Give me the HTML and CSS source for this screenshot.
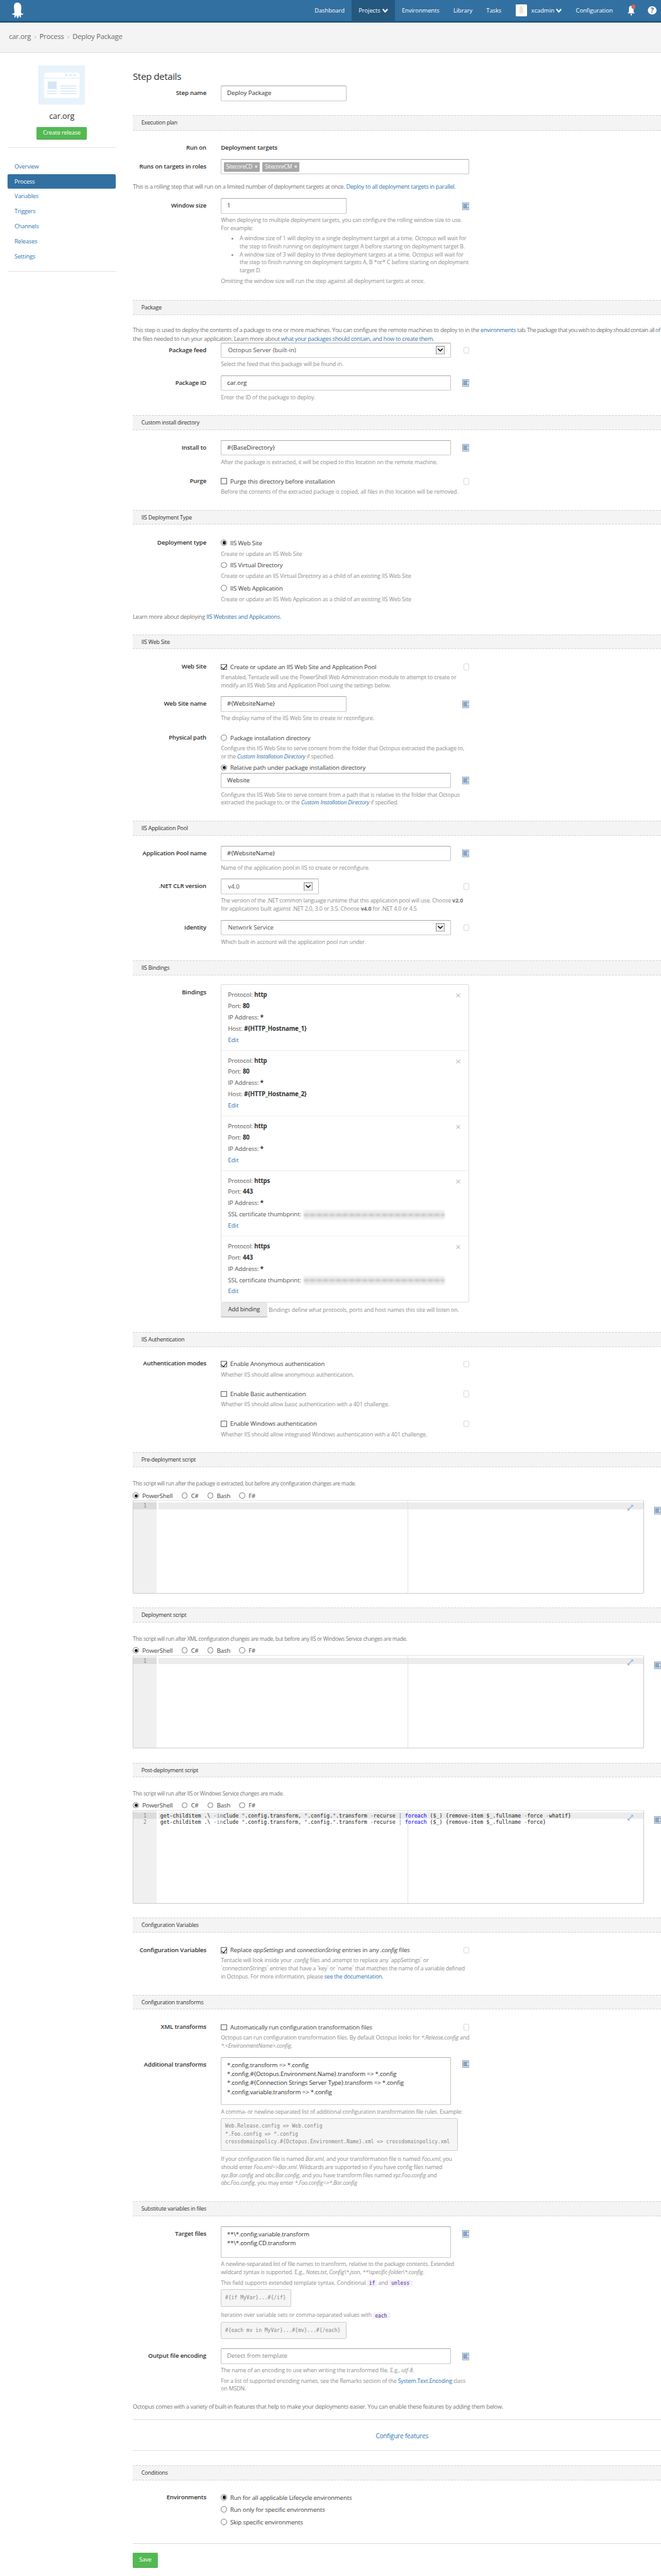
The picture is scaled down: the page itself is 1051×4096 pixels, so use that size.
FILE: index.html
```html
<!DOCTYPE html>
<html lang="en">
<head>
<meta charset="utf-8">
<title>Deploy Package</title>
<link rel="stylesheet" href="styles.css">
</head>
<body>
<svg class="defs" width="0" height="0" aria-hidden="true">
  <symbol id="var" viewBox="0 0 15 16">
    <rect x=".5" y=".5" width="14" height="15" fill="#fff" stroke="#7f8a94"/>
    <rect x="2" y="2" width="8" height="12" fill="#a9c8e8"/>
    <path d="M2 4h8M2 6.500h8M2 9h8M2 11.500h8" stroke="#3f78b5" stroke-width="1"/>
    <path d="M10.500 1v14" stroke="#7f8a94"/>
    <path d="M12.500 3l1.500 2.500h-3zM12.500 13l-1.500-2.500h3z" fill="#6e7780"/>
  </symbol>
  <symbol id="chev" viewBox="0 0 19 18">
    <rect x=".5" y=".5" width="18" height="17" fill="#eee" stroke="#6f6f6f"/>
    <path d="M4.500 6l5 5 5-5" fill="none" stroke="#111" stroke-width="2.200"/>
  </symbol>
  <symbol id="expand" viewBox="0 0 14 14">
    <path d="M3 11L11 3" stroke="#8fb6dc" stroke-width="2"/>
    <path d="M8 1h5v5zM1 8l5 5H1z" fill="#8fb6dc"/>
  </symbol>
  <symbol id="down" viewBox="0 0 12 10">
    <path d="M1 2l5 6 5-6" fill="none" stroke="#fff" stroke-width="3"/>
  </symbol>
  <symbol id="octo" viewBox="0 0 34 34">
    <path d="M17 0c6 0 8.500 5 8.500 11 0 5-1.500 8-.5 11 .6 1.800 3 2.600 5 1.500-.6 2.800-3.700 3.700-6 2.500.8 2 .8 4.500.3 7-1.800-1.200-3-3.800-3.600-6-.4 2.500-1.200 5-3.200 7-1.700-2-2.400-4.500-2.700-7-.8 2.300-2 4.800-4 6-.4-2.500-.2-5 .6-7-2.300 1.200-5.400.3-6-2.500 2 1.100 4.400.3 5-1.500 1-3-.6-6-.6-11C8.800 5 11 0 17 0z"/>
  </symbol>
</svg>

<header class="topbar">
  <svg class="logo" aria-label="Octopus Deploy"><use href="#octo"/></svg>
  <nav class="topnav">
    <a class="nav-item">Dashboard</a>
    <a class="nav-item is-active">Projects<svg class="caret"><use href="#down"/></svg></a>
    <a class="nav-item">Environments</a>
    <a class="nav-item">Library</a>
    <a class="nav-item">Tasks</a>
    <a class="nav-item nav-user">
      <span class="avatar"><svg class="avatar-octo"><use href="#octo"/></svg></span>xcadmin<svg class="caret"><use href="#down"/></svg>
    </a>
    <a class="nav-item">Configuration</a>
    <a class="nav-item nav-bell">
      <svg class="bell" viewBox="0 0 18 25"><path d="M9 3c3.500 0 5 2.500 5 6v6c0 2 1.500 2.500 3 4H1c1.500-1.500 3-2 3-4V9c0-3.500 1.500-6 5-6z" fill="#fff"/><path d="M7 20h4l-2 5z" fill="#fff"/><circle cx="14" cy="5" r="4.500" fill="#e2604f"/></svg>
    </a>
    <a class="nav-help"><span class="help-bubble">?</span></a>
  </nav>
</header>

<div class="crumbs">
  <a>car.org</a><i>›</i><a>Process</a><i>›</i><a>Deploy Package</a>
</div>

<div class="layout">
  <aside class="side">
    <svg class="proj-icon" viewBox="0 0 100 84">
      <rect width="100" height="84" rx="2" fill="#e8f2fb"/>
      <rect x="12" y="15.500" width="76" height="54" rx="5" fill="#fff"/>
      <rect x="12" y="26" width="76" height="2.500" fill="#e8f2fb"/>
      <circle cx="60" cy="21" r="2.300" fill="#d5e6f6"/><circle cx="69" cy="21" r="2.300" fill="#d5e6f6"/><circle cx="78" cy="21" r="2.300" fill="#d5e6f6"/>
      <rect x="20" y="34.500" width="19" height="16" fill="#d5e6f6"/>
      <path d="M19 55h20M19 60h20M47 44h34M47 49h34M47 55h34M47 60h34" stroke="#d5e6f6" stroke-width="2"/>
    </svg>
    <h3 class="proj-name">car.org</h3>
    <a class="btn btn-green btn-release">Create release</a>
    <hr class="side-rule">
    <ul class="side-nav">
      <li><a>Overview</a></li>
      <li class="is-on"><a>Process</a></li>
      <li><a>Variables</a></li>
      <li><a>Triggers</a></li>
      <li><a>Channels</a></li>
      <li><a>Releases</a></li>
      <li><a>Settings</a></li>
    </ul>
    <hr class="side-rule side-rule-end">
  </aside>

  <main class="main">
    <h2 class="title">Step details</h2>

    <div class="row g5"><label class="lbl lbl-input">Step name</label>
      <div class="ctl"><div class="line"><div class="inp w-md">Deploy Package</div></div></div></div>

    <div class="sec g30 sec-tall">Execution plan</div>
    <div class="row g28"><label class="lbl">Run on</label><div class="ctl strong">Deployment targets</div></div>
    <div class="row g13"><label class="lbl lbl-input">Runs on targets in roles</label>
      <div class="ctl"><div class="roles"><span class="tag">SitecoreCD <b>×</b></span><span class="tag">SitecoreCM <b>×</b></span></div></div></div>
    <p class="note g17">This is a rolling step that will run on a limited number of deployment targets at once. <a>Deploy to all deployment targets in parallel.</a></p>
    <div class="row g16"><label class="lbl lbl-input">Window size</label>
      <div class="ctl">
        <div class="line"><div class="inp w-md">1</div><svg class="var"><use href="#var"/></svg></div>
        <p class="help nb g6">When deploying to multiple deployment targets, you can configure the rolling window size to use.<br>For example:</p>
        <ul class="help-list">
          <li>A window size of 1 will deploy to a single deployment target at a time. Octopus will wait for the step to finish running on deployment target A before starting on deployment target B.</li>
          <li>A window size of 3 will deploy to three deployment targets at a time. Octopus will wait for the step to finish running on deployment targets A, B *or* C before starting on deployment target D.</li>
        </ul>
        <p class="help g5">Omitting the window size will run the step against all deployment targets at once.</p>
      </div></div>

    <div class="sec g31">Package</div>
    <p class="note note-tight g24">This step is used to deploy the contents of a package to one or more machines. You can configure the remote machines to deploy to in the <a>environments</a> <span class="note-tail">tab. The package that you wish to deploy should contain all of</span><br>the files needed to run your application. Learn more about <a>what your packages should contain, and how to create them.</a></p>
    <div class="row"><label class="lbl lbl-input">Package feed</label>
      <div class="ctl"><div class="line"><div class="sel sel-short w-lg">Octopus Server (built-in)<svg class="chev"><use href="#chev"/></svg></div><span class="box"></span></div>
      <p class="help g6">Select the feed that this package will be found in.</p></div></div>
    <div class="row g14"><label class="lbl lbl-input">Package ID</label>
      <div class="ctl"><div class="line"><div class="inp w-lg">car.org</div><svg class="var"><use href="#var"/></svg></div>
      <p class="help g6">Enter the ID of the package to deploy.</p></div></div>

    <div class="sec g30">Custom install directory</div>
    <div class="row g21"><label class="lbl lbl-input">Install to</label>
      <div class="ctl"><div class="line"><div class="inp w-lg">#{BaseDirectory}</div><svg class="var"><use href="#var"/></svg></div>
      <p class="help g6">After the package is extracted, it will be copied to this location on the remote machine.</p></div></div>
    <div class="row g22"><label class="lbl">Purge</label>
      <div class="ctl"><div class="line"><span class="opt"><span class="cb"></span>Purge this directory before installation</span><span class="box"></span></div>
      <p class="help g4">Before the contents of the extracted package is copied, all files in this location will be removed.</p></div></div>

    <div class="sec g30">IIS Deployment Type</div>
    <div class="row g29"><label class="lbl">Deployment type</label>
      <div class="ctl">
        <span class="opt"><span class="rd on"></span>IIS Web Site</span>
        <p class="help g5">Create or update an IIS Web Site</p>
        <span class="opt g6"><span class="rd"></span>IIS Virtual Directory</span>
        <p class="help g5">Create or update an IIS Virtual Directory as a child of an existing IIS Web Site</p>
        <span class="opt g7"><span class="rd"></span>IIS Web Application</span>
        <p class="help g5">Create or update an IIS Web Application as a child of an existing IIS Web Site</p>
      </div></div>
    <p class="note g20 note-sm">Learn more about deploying <a>IIS Websites and Applications.</a></p>

    <div class="sec g28">IIS Web Site</div>
    <div class="row g28"><label class="lbl">Web Site</label>
      <div class="ctl"><div class="line"><span class="opt"><span class="cb on"></span>Create or update an IIS Web Site and Application Pool</span><span class="box"></span></div>
      <p class="help nb g4">If enabled, Tentacle will use the PowerShell Web Administration module to attempt to create or<br>modify an IIS Web Site and Application Pool using the settings below.</p></div></div>
    <div class="row g15"><label class="lbl lbl-input">Web Site name</label>
      <div class="ctl"><div class="line"><div class="inp w-md">#{WebsiteName}</div><svg class="var"><use href="#var"/></svg></div>
      <p class="help g6">The display name of the IIS Web Site to create or reconfigure.</p></div></div>
    <div class="row g23"><label class="lbl">Physical path</label>
      <div class="ctl">
        <span class="opt"><span class="rd"></span>Package installation directory</span>
        <p class="help nb g4">Configure this IIS Web Site to serve content from the folder that Octopus extracted the package to,<br>or the <a><em>Custom Installation Directory</em></a> if specified.</p>
        <span class="opt g6"><span class="rd on"></span>Relative path under package installation directory</span>
        <div class="line"><div class="inp w-lg">Website</div><svg class="var"><use href="#var"/></svg></div>
        <p class="help nb g6">Configure this IIS Web Site to serve content from a path that is relative to the folder that Octopus<br>extracted the package to, or the <a><em>Custom Installation Directory</em></a> if specified.</p>
      </div></div>

    <div class="sec g30">IIS Application Pool</div>
    <div class="row g21"><label class="lbl lbl-input">Application Pool name</label>
      <div class="ctl"><div class="line"><div class="inp w-lg">#{WebsiteName}</div><svg class="var"><use href="#var"/></svg></div>
      <p class="help g6">Name of the application pool in IIS to create or reconfigure.</p></div></div>
    <div class="row g15"><label class="lbl lbl-input">.NET CLR version</label>
      <div class="ctl"><div class="line"><div class="sel w-sm">v4.0<svg class="chev"><use href="#chev"/></svg></div><span class="box"></span></div>
      <p class="help nb g6">The version of the .NET common language runtime that this application pool will use. Choose <b>v2.0</b><br>for applications built against .NET 2.0, 3.0 or 3.5. Choose <b>v4.0</b> for .NET 4.0 or 4.5</p></div></div>
    <div class="row g15"><label class="lbl lbl-input">Identity</label>
      <div class="ctl"><div class="line"><div class="sel w-lg">Network Service<svg class="chev"><use href="#chev"/></svg></div><span class="box"></span></div>
      <p class="help g6">Which built-in account will the application pool run under.</p></div></div>

    <div class="sec g30">IIS Bindings</div>
    <div class="row g20"><label class="lbl lbl-bind">Bindings</label>
      <div class="ctl">
        <div class="bindings">
          <div class="binding"><span class="x">×</span><p>Protocol: <b>http</b></p><p>Port: <b>80</b></p><p>IP Address: <b>*</b></p><p>Host: <b>#{HTTP_Hostname_1}</b></p><p><a>Edit</a></p></div>
          <div class="binding"><span class="x">×</span><p>Protocol: <b>http</b></p><p>Port: <b>80</b></p><p>IP Address: <b>*</b></p><p>Host: <b>#{HTTP_Hostname_2}</b></p><p><a>Edit</a></p></div>
          <div class="binding"><span class="x">×</span><p>Protocol: <b>http</b></p><p>Port: <b>80</b></p><p>IP Address: <b>*</b></p><p><a>Edit</a></p></div>
          <div class="binding"><span class="x">×</span><p>Protocol: <b>https</b></p><p>Port: <b>443</b></p><p>IP Address: <b>*</b></p><p>SSL certificate thumbprint: <span class="blur"></span></p><p><a>Edit</a></p></div>
          <div class="binding"><span class="x">×</span><p>Protocol: <b>https</b></p><p>Port: <b>443</b></p><p>IP Address: <b>*</b></p><p>SSL certificate thumbprint: <span class="blur"></span></p><p><a>Edit</a></p></div>
        </div>
        <div class="bind-foot"><a class="btn btn-grey">Add binding</a><span class="help">Bindings define what protocols, ports and host names this site will listen on.</span></div>
      </div></div>

    <div class="sec g31">IIS Authentication</div>
    <div class="row g26"><label class="lbl">Authentication modes</label>
      <div class="ctl">
        <div class="line"><span class="opt"><span class="cb on"></span>Enable Anonymous authentication</span><span class="box"></span></div>
        <p class="help g5">Whether IIS should allow anonymous authentication.</p>
        <div class="line g22"><span class="opt"><span class="cb"></span>Enable Basic authentication</span><span class="box"></span></div>
        <p class="help g4">Whether IIS should allow basic authentication with a 401 challenge.</p>
        <div class="line g23"><span class="opt"><span class="cb"></span>Enable Windows authentication</span><span class="box"></span></div>
        <p class="help g5">Whether IIS should allow integrated Windows authentication with a 401 challenge.</p>
      </div></div>

    <div class="sec g29">Pre-deployment script</div>
    <p class="note g27 note-xs">This script will run after the package is extracted, but before any configuration changes are made.</p>
    <div class="langs g7"><span class="opt"><span class="rd on"></span>PowerShell</span><span class="opt"><span class="rd"></span>C#</span><span class="opt"><span class="rd"></span>Bash</span><span class="opt"><span class="rd"></span>F#</span></div>
    <div class="editor-line">
      <div class="editor"><div class="gutter"><span class="ln on">1</span></div><div class="code"><div class="cl on"></div></div><svg class="expand"><use href="#expand"/></svg></div>
      <svg class="var"><use href="#var"/></svg>
    </div>

    <div class="sec g30">Deployment script</div>
    <p class="note g26 note-xs">This script will run after XML configuration changes are made, but before any IIS or Windows Service changes are made.</p>
    <div class="langs g7"><span class="opt"><span class="rd on"></span>PowerShell</span><span class="opt"><span class="rd"></span>C#</span><span class="opt"><span class="rd"></span>Bash</span><span class="opt"><span class="rd"></span>F#</span></div>
    <div class="editor-line">
      <div class="editor"><div class="gutter"><span class="ln on">1</span></div><div class="code"><div class="cl on"></div></div><svg class="expand"><use href="#expand"/></svg></div>
      <svg class="var"><use href="#var"/></svg>
    </div>

    <div class="sec g30">Post-deployment script</div>
    <p class="note g26 note-xs">This script will run after IIS or Windows Service changes are made.</p>
    <div class="langs g7"><span class="opt"><span class="rd on"></span>PowerShell</span><span class="opt"><span class="rd"></span>C#</span><span class="opt"><span class="rd"></span>Bash</span><span class="opt"><span class="rd"></span>F#</span></div>
    <div class="editor-line">
      <div class="editor"><div class="gutter"><span class="ln on">1</span><span class="ln">2</span></div>
        <div class="code">
          <div class="cl on">get-childitem .\ <i>-in</i>clude <i>*</i>.config.transform, <i>*</i>.config.<i>*</i>.transform <i>-</i>recurse <i>|</i> <u>foreach</u> ($_) {remove-item $_.fullname <i>-</i>force <i>-</i>whatif}</div>
          <div class="cl">get-childitem .\ <i>-in</i>clude <i>*</i>.config.transform, <i>*</i>.config.<i>*</i>.transform <i>-</i>recurse <i>|</i> <u>foreach</u> ($_) {remove-item $_.fullname <i>-</i>force}</div>
        </div><svg class="expand"><use href="#expand"/></svg></div>
      <svg class="var"><use href="#var"/></svg>
    </div>

    <div class="sec g30">Configuration Variables</div>
    <div class="row g28"><label class="lbl">Configuration Variables</label>
      <div class="ctl"><div class="line"><span class="opt"><span class="cb on"></span><span>Replace <em>appSettings</em> and <em>connectionString</em> entries in any <em>.config</em> files</span></span><span class="box"></span></div>
      <p class="help nb g4">Tentacle will look inside your <em>.config</em> files and attempt to replace any `appSettings` or<br>`connectionStrings` entries that have a `key` or `name` that matches the name of a variable defined<br>in Octopus. For more information, please <a>see the documentation.</a></p></div></div>

    <div class="sec g30">Configuration transforms</div>
    <div class="row g28"><label class="lbl">XML transforms</label>
      <div class="ctl"><div class="line"><span class="opt"><span class="cb"></span>Automatically run configuration transformation files</span><span class="box"></span></div>
      <p class="help nb g4">Octopus can run configuration transformation files. By default Octopus looks for <em>*.Release.config</em> and<br><em>*.&lt;EnvironmentName&gt;.config</em>.</p></div></div>
    <div class="row g15"><label class="lbl lbl-area">Additional transforms</label>
      <div class="ctl"><div class="line line-top"><div class="area w-lg area-4">*.config.transform =&gt; *.config<br>*.config.#{Octopus.Environment.Name}.transform =&gt; *.config<br>*.config.#{Connection Strings Server Type}.transform =&gt; *.config<br>*.config.variable.transform =&gt; *.config</div><svg class="var var-top"><use href="#var"/></svg></div>
      <p class="help nb g6">A comma- or newline-separated list of additional configuration transformation file rules. Example:</p>
      <pre class="pre g5 pre-wide">Web.Release.config =&gt; Web.config
*.Foo.config =&gt; *.config
crossdomainpolicy.#{Octopus.Environment.Name}.xml =&gt; crossdomainpolicy.xml</pre>
      <p class="help nb g10">If your configuration file is named <em>Bar.xml</em>, and your transformation file is named <em>Foo.xml</em>, you<br>should enter <em>Foo.xml=&gt;Bar.xml</em>. Wildcards are supported so if you have config files named<br><em>xyz.Bar.config</em> and <em>abc.Bar.config</em>, and you have transform files named <em>xyz.Foo.config</em> and<br><em>abc.Foo.config</em>, you may enter <em>*.Foo.config=&gt;*.Bar.config</em></p></div></div>

    <div class="sec g30">Substitute variables in files</div>
    <div class="row g21"><label class="lbl lbl-area">Target files</label>
      <div class="ctl"><div class="line line-top"><div class="area w-lg area-2">**\*.config.variable.transform<br>**\*.config.CD.transform</div><svg class="var var-top"><use href="#var"/></svg></div>
      <p class="help nb g6">A newline-separated list of file names to transform, relative to the package contents. Extended<br>wildcard syntax is supported. E.g., <em>Notes.txt</em>, <em>Config\*.json</em>, <em>**\specific-folder\*.config</em>.</p>
      <p class="help g6">This field supports extended template syntax. Conditional <code>if</code> and <code>unless</code>:</p>
      <pre class="pre g4 pre-if">#{if MyVar}...#{/if}</pre>
      <p class="help g10">Iteration over variable sets or comma-separated values with <code>each</code>:</p>
      <pre class="pre g4 pre-each">#{each mv in MyVar}...#{mv}...#{/each}</pre>
      </div></div>
    <div class="row g20"><label class="lbl lbl-input">Output file encoding</label>
      <div class="ctl"><div class="line"><div class="inp w-lg is-ph">Detect from template</div><svg class="var"><use href="#var"/></svg></div>
      <p class="help g6">The name of an encoding to use when writing the transformed file. E.g., <em>utf-8</em>.</p>
      <p class="help nb g5">For a list of supported encoding names, see the Remarks section of the <a>System.Text.Encoding</a> class<br>on MSDN.</p></div></div>
    <p class="note g20 note-sm">Octopus comes with a variety of built-in features that help to make your deployments easier. You can enable these features by adding them below.</p>
    <div class="features g18"><a>Configure features</a></div>

    <div class="sec g31">Conditions</div>
    <div class="row g27"><label class="lbl">Environments</label>
      <div class="ctl">
        <span class="opt"><span class="rd on"></span>Run for all applicable Lifecycle environments</span>
        <span class="opt g6"><span class="rd"></span>Run only for specific environments</span>
        <span class="opt g7"><span class="rd"></span>Skip specific environments</span>
      </div></div>
    <hr class="end-rule">
    <a class="btn btn-green btn-save">Save</a>
  </main>
</div>
</body>
</html>
```
FILE: styles.css
```css
/* 1rem is one pixel of the full-size design, drawn at 0.744 */
html { font-size: 0.744px; }
* { box-sizing: border-box; }
body { margin: 0; font-family: "Open Sans", "Noto Sans", sans-serif; font-size: 12.5rem; line-height: 18rem; color: #444; background: #fff; letter-spacing: -0.25rem; }
.defs { position: absolute; }
a { color: #3177b3; text-decoration: none; }
p, ul, h2, h3, pre { margin: 0; }

.g4 { margin-top: 4rem; } .g5 { margin-top: 5rem; } .g6 { margin-top: 6rem; } .g7 { margin-top: 7rem; }
.g10 { margin-top: 10rem; } .g13 { margin-top: 13rem; } .g14 { margin-top: 14rem; } .g15 { margin-top: 15rem; }
.g16 { margin-top: 16rem; } .g17 { margin-top: 17rem; } .g18 { margin-top: 18rem; } .g20 { margin-top: 20rem; }
.g21 { margin-top: 21rem; } .g22 { margin-top: 22rem; } .g23 { margin-top: 23rem; } .g24 { margin-top: 24rem; }
.g26 { margin-top: 26rem; } .g27 { margin-top: 27rem; } .g28 { margin-top: 28rem; } .g29 { margin-top: 29rem; }
.g30 { margin-top: 30rem; } .g31 { margin-top: 31rem; } .g32 { margin-top: 32rem; }

/* top bar */
.topbar { display: flex; justify-content: space-between; height: 49rem; background: #3370a2; border-bottom: 5rem solid #24587f; }
.logo { width: 34rem; height: 34rem; margin: 6rem 0 0 20rem; fill: #fff; }
.topnav { display: flex; align-items: stretch; height: 44rem; padding-right: 10rem; }
.nav-item { display: flex; align-items: center; padding: 0 15rem; color: #fff; letter-spacing: -0.05rem; }
.nav-item.is-active { background: #24587f; }
.caret { width: 12rem; height: 10rem; margin-left: 4rem; }
.avatar { display: flex; align-items: center; justify-content: center; width: 25rem; height: 25rem; margin-right: 9rem; background: #fff; border-radius: 2rem; }
.avatar-octo { width: 18rem; height: 22rem; fill: #e9e6d8; }
.nav-bell { padding-right: 27rem; }
.bell { width: 18rem; height: 25rem; }
.nav-help { display: flex; align-items: center; }
.help-bubble { width: 18rem; height: 18rem; border-radius: 50%; background: #fff; color: #3370a2; font-weight: 700; font-size: 14rem; line-height: 18rem; text-align: center; }

.crumbs { height: 64rem; padding: 20rem 0 0 19rem; background: #f4f4f4; border-bottom: 2rem solid #dedede; font-size: 15rem; line-height: 18rem; color: #6a6a6a; }
.crumbs a { color: #6a6a6a; }
.crumbs i { margin: 0 7rem; font-style: normal; color: #bbb; }

.layout { display: flex; align-items: flex-start; }

/* sidebar */
.side { width: 232rem; margin-left: 16rem; padding-top: 27rem; text-align: center; flex: none; }
.proj-icon { display: block; width: 100rem; height: 84rem; margin: 0 auto; }
.proj-name { margin-top: 13rem; font-size: 17rem; line-height: 24rem; font-weight: 400; color: #333; }
.btn { display: inline-block; border-radius: 2rem; text-align: center; }
.btn-green { background: #53b953; border-bottom: 2rem solid #45a045; color: #fff; }
.btn-release { width: 108rem; height: 28rem; margin-top: 10rem; line-height: 25rem; }
.side-rule { height: 1rem; margin: 16rem 0 0; border: 0; background: #e2e2e2; }
.side-rule-end { margin-top: 16rem; }
.side-nav { margin: 24rem 0 0; padding: 0; list-style: none; text-align: left; }
.side-nav li { height: 32rem; padding-left: 15rem; line-height: 32rem; }
.side-nav li.is-on { background: #3370a2; border-radius: 3rem; }
.side-nav li.is-on a { color: #fff; }

/* main column */
.main { flex: 1; min-width: 0; margin-left: 36rem; padding: 35rem 0 17rem; }
.title { font-size: 20rem; line-height: 30rem; font-weight: 400; color: #333; letter-spacing: -0.4rem; }
.sec { height: 32rem; padding-left: 18rem; background: #f4f4f4; border-top: 1px dashed #d4d4d4; border-bottom: 1px dashed #d4d4d4; font-size: 12rem; line-height: 30rem; color: #333; letter-spacing: -0.35rem; }
.sec-tall { height: 33rem; }

.row { display: grid; grid-template-columns: 157rem 531rem; column-gap: 31rem; }
.lbl { font-size: 13rem; font-weight: 600; text-align: right; line-height: 20rem; color: #333; letter-spacing: -0.2rem; }
.lbl-input { line-height: 33rem; }
.lbl-area { padding-top: 7rem; }
.lbl-bind { padding-top: 7rem; }
.ctl { min-width: 0; }
.strong { font-size: 13rem; font-weight: 600; line-height: 20rem; color: #333; letter-spacing: -0.2rem; }
.line { display: flex; align-items: center; justify-content: space-between; }
.line-top { align-items: flex-start; }

.inp, .sel, .area, .roles { border: 1px solid #c4c4c4; border-top-color: #aaa; border-bottom: 2rem solid #ccc; border-radius: 2rem; background: #fff; color: #333; font-size: 13rem; letter-spacing: -0.05rem; }
.inp { height: 33rem; padding: 0 12rem; line-height: 30rem; }
.is-ph { color: #888; }
.sel { display: flex; align-items: center; justify-content: space-between; height: 33rem; padding: 0 12rem 0 14rem; color: #555; }
.sel-short { height: 32rem; }
.chev { width: 19rem; height: 18rem; }
.area { padding: 7rem 12rem; line-height: 19.2rem; letter-spacing: -0.2rem; }
.area-4 { height: 103rem; }
.area-2 { height: 67rem; }
.w-sm { width: 209rem; }
.w-md { width: 269rem; }
.w-lg { width: 492rem; }
.var { width: 15rem; height: 16rem; flex: none; }
.var-top { margin-top: 8rem; }
.box { width: 13rem; height: 14rem; border: 1px solid #d8d8d8; border-radius: 3rem; flex: none; }

.roles { display: flex; gap: 6rem; height: 32rem; padding: 5rem 5rem; }
.tag { height: 20rem; padding: 0 5rem; background: #a8a8a8; border-bottom: 1px solid #999; border-radius: 2rem; color: #fff; font-size: 11.5rem; line-height: 19rem; letter-spacing: -0.3rem; }
.tag b { margin-left: 2rem; }

.note { line-height: 18rem; color: #777; letter-spacing: -0.43rem; }
.note-tight { letter-spacing: -0.47rem; white-space: nowrap; }
.note-tail { letter-spacing: -0.85rem; }
.note-sm { letter-spacing: -0.43rem; }
.note-xs { font-size: 11.5rem; letter-spacing: -0.45rem; }
.help { font-size: 12rem; line-height: 17rem; color: #909090; letter-spacing: -0.2rem; }
.nb { white-space: nowrap; letter-spacing: -0.28rem; }
.help b { font-weight: 700; color: #777; }
.help-list { margin: 4rem 0 0; padding-left: 40rem; font-size: 12rem; line-height: 17.4rem; color: #909090; letter-spacing: -0.2rem; }

.opt { display: flex; align-items: center; height: 20rem; color: #444; font-size: 13rem; letter-spacing: -0.2rem; }
.cb, .rd { flex: none; width: 13rem; height: 13rem; margin-right: 7rem; border: 1px solid #666; background: #fff; position: relative; }
.rd { border-radius: 50%; border-color: #777; top: -1rem; }
.rd.on::after { content: ""; position: absolute; left: 2rem; top: 2rem; width: 7rem; height: 7rem; border-radius: 50%; background: #222; }
.cb.on::after { content: ""; position: absolute; left: 3rem; top: -2rem; width: 5rem; height: 11rem; border: solid #111; border-width: 0 2rem 2rem 0; transform: rotate(38deg); }

.bindings { border: 1px solid #ddd; border-top-width: 2rem; border-radius: 3rem; }
.binding { position: relative; padding: 9rem 14rem 10rem; border-bottom: 2rem solid #eee; font-size: 13rem; line-height: 24rem; letter-spacing: -0.15rem; color: #555; }
.binding:last-child { border-bottom: 0; }
.binding b { font-weight: 700; color: #333; }
.x { position: absolute; right: 17rem; top: 9rem; font-size: 20rem; line-height: 26rem; color: #bbb; }
.blur { display: inline-block; width: 302rem; height: 20rem; margin-left: 2rem; vertical-align: middle; background: repeating-linear-gradient(90deg, #c2c2c2 0 9rem, #dcdcdc 9rem 14rem) 0 8rem / 100% 5rem no-repeat, #ededed; filter: blur(2rem); }
.bind-foot { display: flex; align-items: center; gap: 3rem; }
.btn-grey { width: 99rem; height: 33rem; background: #e9e9e9; border-bottom: 3rem solid #ccc; color: #333; line-height: 30rem; }

.langs { display: flex; gap: 19rem; height: 18rem; }
.langs .opt { height: 18rem; }
.editor-line { display: flex; align-items: flex-start; justify-content: space-between; }
.editor { position: relative; display: flex; width: 1093rem; height: 200rem; padding-top: 4rem; border: 1px solid #ccc; border-top-width: 2rem; border-top-color: #e4e4e4; border-bottom-width: 2rem; border-radius: 3rem; overflow: hidden; font-family: "DejaVu Sans Mono", monospace; font-size: 11.15rem; line-height: 14rem; letter-spacing: 0; color: #222; }
.editor-line > .var { margin-top: 14rem; }
.editor::after { content: ""; position: absolute; left: 585rem; top: 0; bottom: 0; width: 1px; background: #e2e2e2; }
.gutter { position: absolute; left: 0; top: 0; bottom: 0; width: 49rem; padding-top: 4rem; background: #f0f0f0; color: #888; text-align: center; }
.ln { display: block; height: 14rem; }
.ln.on { background: #dcdcdc; }
.code { flex: 1; margin-left: 53rem; }
.cl { height: 14rem; padding-left: 4rem; white-space: pre; }
.cl.on { background: #ececec; }
.cl i { font-style: normal; color: #5f7a9a; }
.cl u { text-decoration: none; color: #0000ff; }
.expand { position: absolute; right: 22rem; top: 8rem; width: 14rem; height: 14rem; z-index: 1; }

.pre { padding: 8rem; background: #f5f5f5; border: 1px solid #ccc; border-radius: 2rem; font-family: "DejaVu Sans Mono", monospace; font-size: 10.8rem; line-height: 17rem; letter-spacing: 0; color: #888; }
.pre-wide { width: 506rem; height: 70rem; }
.pre-if { width: 151rem; height: 37rem; padding-top: 9rem; }
.pre-each { width: 269rem; height: 37rem; padding-top: 9rem; }
code { padding: 1rem 4rem; background: #f5f0fb; border-radius: 2rem; font-family: "DejaVu Sans Mono", monospace; font-size: 10.8rem; letter-spacing: 0; color: #4a2a8c; }

.features { height: 68rem; padding-right: 0; border-top: 1px solid #ddd; border-bottom: 1px solid #ddd; line-height: 69rem; font-size: 13.5rem; text-align: center; padding-left: 22rem; }
.end-rule { height: 1px; margin: 35rem 0 0; border: 0; background: #ddd; }
.btn-save { display: block; width: 53rem; height: 33rem; margin-top: 18rem; line-height: 30rem; border-radius: 2rem; }
```
